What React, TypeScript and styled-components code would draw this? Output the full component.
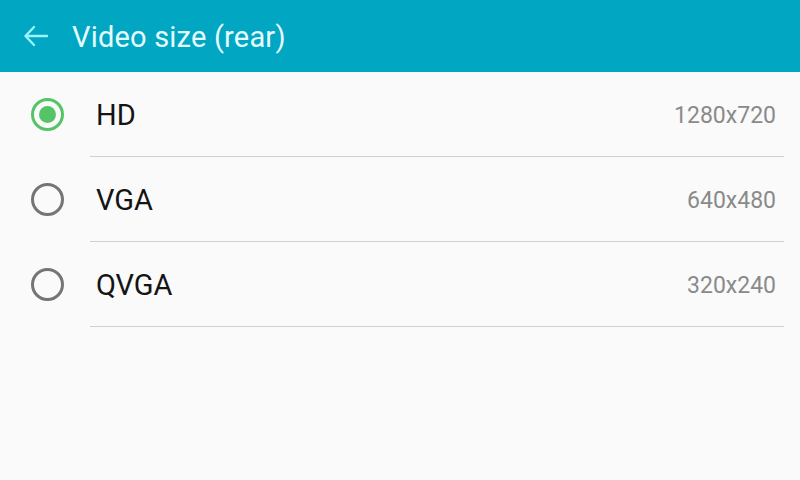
import styled, { createGlobalStyle } from 'styled-components';

const GlobalStyle = createGlobalStyle`
  html, body {
    margin: 0;
    padding: 0;
    background: #fafafa;
    font-family: Roboto, "Noto Sans", sans-serif;
  }
`;

const Screen = styled.div`
  width: 800px;
  height: 480px;
  background: #fafafa;
  overflow: hidden;
`;

const Header = styled.header`
  height: 72px;
  background: #00a6c2;
  display: flex;
  align-items: center;
  padding-left: 22px;
  gap: 22px;
`;

const BackButton = styled.button`
  border: none;
  background: none;
  padding: 0;
  width: 28px;
  height: 28px;
  display: flex;
  align-items: center;
  justify-content: center;
  cursor: pointer;
`;

const Title = styled.h1`
  margin: 0;
  font-size: 29px;
  font-weight: 400;
  color: #e6fbff;
  letter-spacing: 0.2px;
  padding-top: 2px;
`;

const List = styled.ul`
  list-style: none;
  margin: 0;
  padding: 0;
`;

const Row = styled.li`
  height: 85px;
  display: flex;
  align-items: center;
  padding-left: 31px;
  padding-right: 24px;
  cursor: pointer;
`;

const Radio = styled.span<{ $checked: boolean }>`
  width: 33px;
  height: 33px;
  box-sizing: border-box;
  border-radius: 50%;
  border: 3px solid ${({ $checked }) => ($checked ? '#55c466' : '#757575')};
  display: flex;
  align-items: center;
  justify-content: center;
  flex-shrink: 0;

  &::after {
    content: '';
    width: 17px;
    height: 17px;
    border-radius: 50%;
    background: #55c466;
    display: ${({ $checked }) => ($checked ? 'block' : 'none')};
  }
`;

const Body = styled.div`
  flex: 1;
  height: 100%;
  margin-left: 26px;
  display: flex;
  align-items: center;
  justify-content: space-between;
  border-bottom: 1px solid #cfcfcf;
  box-sizing: border-box;
  padding-top: 2px;
  padding-right: 8px;
  margin-right: -8px;
`;

const Label = styled.span`
  font-size: 29px;
  color: #141414;
  padding-left: 6px;
`;

const Value = styled.span`
  font-size: 23px;
  color: #8a8a8a;
`;

const options = [
  { label: 'HD', value: '1280x720' },
  { label: 'VGA', value: '640x480' },
  { label: 'QVGA', value: '320x240' },
];

export default function App() {
  const selected = 'HD';
  return (
    <Screen>
      <GlobalStyle />
      <Header>
        <BackButton aria-label="Back">
          <svg width="26" height="22" viewBox="0 0 26 22" fill="none" stroke="#9ff3ff" strokeWidth="2.4" strokeLinecap="round" strokeLinejoin="round">
            <path d="M24 11H3" />
            <path d="M11 2L2.5 11L11 20" />
          </svg>
        </BackButton>
        <Title>Video size (rear)</Title>
      </Header>
      <List>
        {options.map((o) => (
          <Row key={o.label}>
            <Radio $checked={o.label === selected} />
            <Body>
              <Label>{o.label}</Label>
              <Value>{o.value}</Value>
            </Body>
          </Row>
        ))}
      </List>
    </Screen>
  );
}
